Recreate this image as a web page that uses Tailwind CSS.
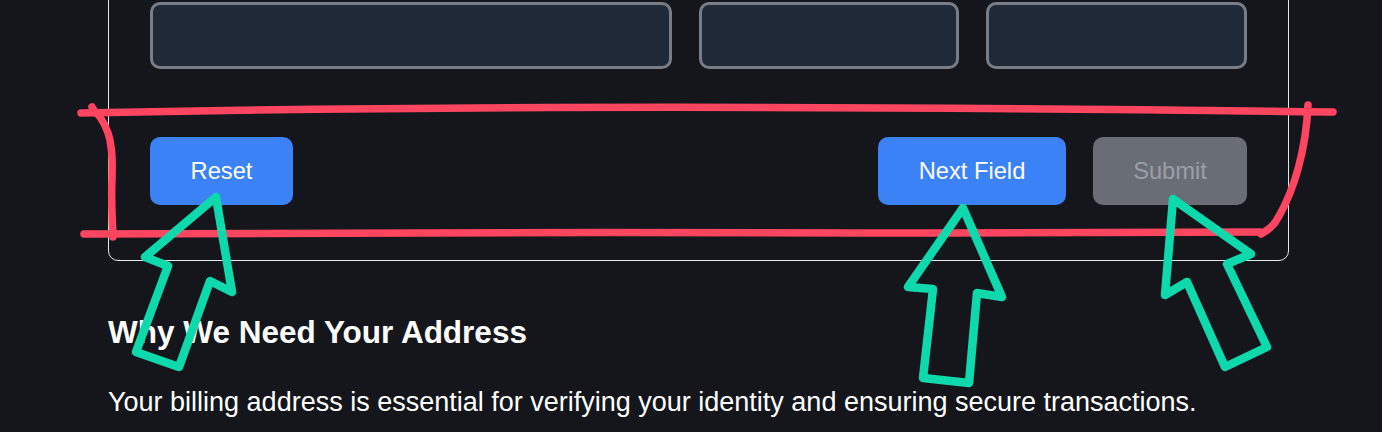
<!DOCTYPE html>
<html lang="en">

<head>
    <meta charset="UTF-8">
    <title>Billing Address</title>
    <script src="https://cdn.jsdelivr.net/npm/@tailwindcss/browser@4"></script>
</head>

<body class="relative h-[432px] overflow-hidden bg-[#14161c] font-['Liberation_Sans',Arial,sans-serif] text-white">
    <main class="px-[108px] w-[1397px]">
        <form class="-mt-[40px] w-[1181px] border border-[#e5e7eb] rounded-[10px] px-[41px] pt-[41px] pb-[55px]">
            <div class="grid grid-cols-[2fr_1fr_1fr] gap-[27px]">
                <input type="text" class="h-[67px] bg-[#1f2937] border-[3px] border-[#787d87] rounded-[10px]">
                <input type="text" class="h-[67px] bg-[#1f2937] border-[3px] border-[#787d87] rounded-[10px]">
                <input type="text" class="h-[67px] bg-[#1f2937] border-[3px] border-[#787d87] rounded-[10px]">
            </div>
            <div class="flex justify-between mt-[68px]">
                <button type="button" class="w-[143px] h-[68px] pt-[1px] bg-[#3b82f6] rounded-[10px] text-[23.7px]">Reset</button>
                <div class="flex gap-[27px]">
                    <button type="button" class="w-[188px] h-[68px] pt-[1px] bg-[#3b82f6] rounded-[10px] text-[23.7px]">Next Field</button>
                    <button type="button" disabled class="w-[154px] h-[68px] pt-[1px] bg-[#696d75] rounded-[10px] text-[23.7px] text-[#9c9fa5]">Submit</button>
                </div>
            </div>
        </form>
        <section class="mt-[49px]">
            <h2 class="text-[31.5px] leading-[44px] font-bold">Why We Need Your Address</h2>
            <p class="mt-[26px] text-[27px] leading-[44px] whitespace-nowrap">Your billing address is essential for verifying your identity and ensuring secure transactions.</p>
        </section>
    </main>

    <!-- hand drawn markup on top of the screenshot -->
    <svg class="absolute inset-0" width="1382" height="432" viewBox="0 0 1382 432" fill="none" stroke-linecap="round" stroke-linejoin="round">
        <g stroke="#ff4560" stroke-width="7.5">
            <path d="M81 113 C 400 106 800 105 1333 112" />
            <path d="M92 107 C 94 112 97 113 100 117 C 106 126 110 135 111 147 C 113 160 112 170 112 180 C 111 195 112 215 113 237" />
            <path d="M84 234 C 300 232 600 232 860 233 C 1000 233 1150 232 1260 232" />
            <path d="M1261 234 C 1268 230 1274 226 1279 216 C 1294 190 1306 150 1308 105" />
        </g>
        <g stroke="#0ed9ac" stroke-width="8.5">
            <path d="M216 197 L145 257 L168 266 L136 352 L179 367 L210 281 L232 292 Z" />
            <path d="M963 208 L908 287 L933 289 L923 378 L969 383 L977 293 L1002 297 Z" />
            <path d="M1173 199 L1251 254 L1227 264 L1267 347 L1225 367 L1187 282 L1165 295 Z" />
        </g>
    </svg>
</body>

</html>
